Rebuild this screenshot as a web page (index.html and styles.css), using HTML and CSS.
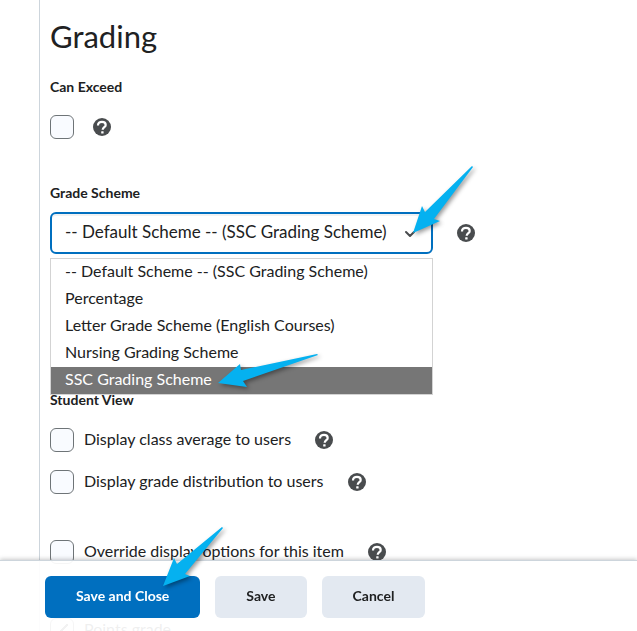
FILE: index.html
```
<!DOCTYPE html>
<html lang="en">
<head>
  <meta charset="UTF-8">
  <meta name="viewport" content="width=device-width, initial-scale=1">
  <title>Grading</title>
  <link rel="stylesheet" href="styles.css">
</head>
<body>

  <!-- shared shapes -->
  <svg class="defs" aria-hidden="true">
    <symbol id="help" viewBox="0 0 18 18">
      <circle cx="9" cy="9" r="9" fill="#494c4e"/>
      <path d="M5 7.4C5 5 6.700 3.800 9 3.800s3.700 1.200 3.700 3.100c0 2.400-3 2.200-3 4.900" fill="none" stroke="#fff" stroke-width="2.200"/>
      <rect x="8.200" y="13.200" width="2.400" height="2.300" rx="0.5" fill="#fff"/>
    </symbol>
  </svg>

  <main class="panel">
    <h1>Grading</h1>

    <section class="field">
      <label class="heading" for="exceed">Can Exceed</label>
      <div class="row">
        <input type="checkbox" id="exceed">
        <button class="help" aria-label="Help for Can Exceed"><svg><use href="#help"/></svg></button>
      </div>
    </section>

    <section class="field">
      <label class="heading" for="scheme">Grade Scheme</label>
      <div class="row scheme-row">
        <div class="dropdown">
          <select id="scheme">
            <option>-- Default Scheme -- (SSC Grading Scheme)</option>
            <option>Percentage</option>
            <option>Letter Grade Scheme (English Courses)</option>
            <option>Nursing Grading Scheme</option>
            <option>SSC Grading Scheme</option>
          </select>
          <svg class="chevron" viewBox="0 0 12 8"><path d="M2 2l4 4 4-4" fill="none" stroke="#494c4e" stroke-width="2" stroke-linecap="round" stroke-linejoin="round"/></svg>
          <ul class="options" role="listbox">
            <li role="option">-- Default Scheme -- (SSC Grading Scheme)</li>
            <li role="option">Percentage</li>
            <li role="option">Letter Grade Scheme (English Courses)</li>
            <li role="option">Nursing Grading Scheme</li>
            <li role="option" class="active" aria-selected="true">SSC Grading Scheme</li>
          </ul>
          <svg class="arrow arrow-select" viewBox="0 0 60 67"><path d="M0 67L9 40l3 6L59 0l1 1L21 53l6 2z"/></svg>
          <svg class="arrow arrow-option" viewBox="0 0 100 33"><path d="M0 29L22 10l1 6L99 0l1 1L25 27l4 6z"/></svg>
        </div>
        <button class="help" aria-label="Help for Grade Scheme"><svg><use href="#help"/></svg></button>
      </div>
    </section>

    <section class="field student-view">
      <h2 class="heading">Student View</h2>
      <div class="row">
        <input type="checkbox" id="average">
        <label for="average">Display class average to users</label>
        <button class="help" aria-label="Help for class average"><svg><use href="#help"/></svg></button>
      </div>
      <div class="row">
        <input type="checkbox" id="distribution">
        <label for="distribution">Display grade distribution to users</label>
        <button class="help" aria-label="Help for grade distribution"><svg><use href="#help"/></svg></button>
      </div>
      <div class="row override">
        <input type="checkbox" id="override">
        <label for="override">Override display options for this item</label>
        <button class="help" aria-label="Help for override"><svg><use href="#help"/></svg></button>
      </div>
      <div class="row points">
        <input type="checkbox" id="points" checked>
        <label for="points">Points grade</label>
      </div>
    </section>
  </main>

  <footer class="actions">
    <button class="btn primary">Save and Close</button>
    <button class="btn">Save</button>
    <button class="btn">Cancel</button>
    <svg class="arrow arrow-save" viewBox="0 0 60 59"><path d="M0 59L11 31l3 6L59 0l1 1L22 47l5 2z"/></svg>
  </footer>

</body>
</html>
```
FILE: styles.css
```
* {
  box-sizing: border-box;
}

html {
  scrollbar-width: none;
}

body {
  margin: 0;
  background: #fff;
  color: #202122;
  font-family: Lato, "Liberation Sans", sans-serif;
  font-size: 16px;
  line-height: 24px;
}

.defs {
  position: absolute;
  width: 0;
  height: 0;
}

.panel {
  margin-left: 39px;
  padding: 16px 10px 0;
  border-left: 1px solid #cdd5dc;
}

h1 {
  margin: 0 0 21px;
  font-size: 31px;
  font-weight: 400;
  line-height: 40px;
}

.heading {
  display: block;
  margin: 0;
  font-size: 14px;
  font-weight: 700;
  line-height: 20px;
}

.field {
  padding-bottom: 44px;
}

.field > label + .row {
  margin-top: 18px;
}

.field > label + .scheme-row {
  margin-top: 9px;
}

.row {
  display: flex;
  align-items: center;
}

.row label {
  margin-left: 10px;
  padding-bottom: 2px;
  line-height: 22px;
}

input[type="checkbox"] {
  appearance: none;
  width: 24px;
  height: 24px;
  margin: 0;
  border: 1px solid #6e7477;
  border-radius: 6px;
  background: #f9fbff;
}

input[type="checkbox"]:checked {
  background: #f9fbff linear-gradient(135deg, transparent 45%, #494c4e 45%, #494c4e 55%, transparent 55%) center / 12px 12px no-repeat;
}

.help {
  width: 18px;
  height: 18px;
  margin-left: 19px;
  padding: 0;
  border: 0;
  background: none;
}

.help svg {
  display: block;
  width: 18px;
  height: 18px;
}

.dropdown {
  position: relative;
  width: 383px;
}

.scheme-row .help,
.student-view .help {
  margin-left: 24px;
}

select {
  appearance: none;
  display: block;
  width: 100%;
  height: 42px;
  padding: 0 40px 3px 13px;
  border: 2px solid #006fbf;
  border-radius: 6px;
  background: #fff;
  box-shadow: inset 0 2px 0 #f1f2f3;
  color: #202122;
  font-family: inherit;
  font-size: 17px;
}

.chevron {
  position: absolute;
  top: 18px;
  right: 17px;
  width: 12px;
  height: 8px;
}

.options {
  position: absolute;
  top: 46px;
  left: 0;
  z-index: 1;
  width: 100%;
  margin: 0;
  padding: 0;
  border: 1px solid #d3d3d3;
  background: #fff;
  list-style: none;
}

.options li {
  padding: 0 14px 3px;
}

.options .active {
  background: #767676;
  color: #fff;
}

.student-view {
  margin-top: 92px;
}

.student-view .row {
  margin-top: 18px;
}

.student-view .override {
  margin-top: 46px;
}

.student-view .points {
  margin-top: 54px;
}

.actions {
  position: fixed;
  right: 0;
  bottom: 0;
  left: 0;
  z-index: 2;
  display: flex;
  gap: 15px;
  padding: 15px 45px 13px;
  border-top: 1px solid #cdd5dc;
  background: rgba(255, 255, 255, 0.93);
  box-shadow: 0 -1px 4px rgba(73, 76, 78, 0.3);
}

.btn {
  height: 42px;
  padding: 0 31px 3px;
  border: 0;
  border-radius: 6px;
  background: #e3e9f1;
  color: #202122;
  font-family: inherit;
  font-size: 14px;
  font-weight: 700;
}

.btn.primary {
  background: #006fbf;
  color: #fff;
}

/* callout arrows */
.arrow {
  position: absolute;
  z-index: 3;
  overflow: visible;
  fill: #05b1f0;
  filter: drop-shadow(2px 2px 2px rgba(0, 0, 0, 0.4));
}

.arrow-select {
  top: -46px;
  left: 363px;
  width: 60px;
  height: 67px;
}

.arrow-option {
  top: 142px;
  left: 168px;
  width: 100px;
  height: 33px;
}

.arrow-save {
  top: -34px;
  left: 163px;
  width: 60px;
  height: 59px;
}
```
